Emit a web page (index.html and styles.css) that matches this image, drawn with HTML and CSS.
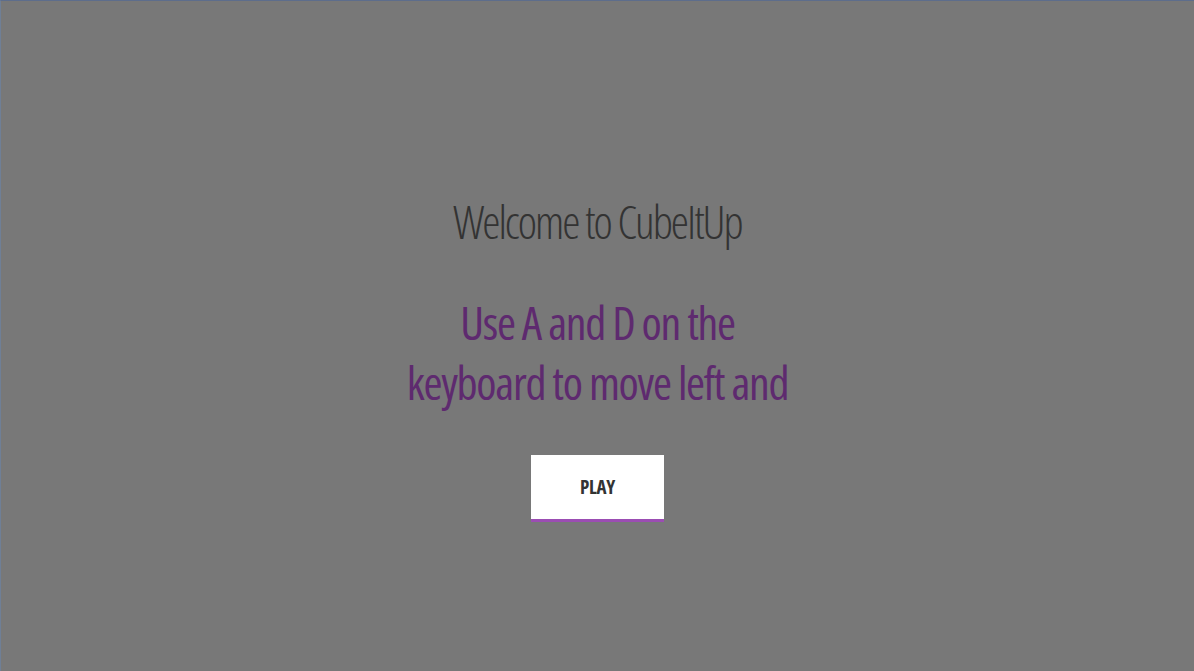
FILE: index.html
```html
<!DOCTYPE html>
<html>
<head>
<meta charset="utf-8">
<link rel="stylesheet" href="styles.css">
</head>
<body>
<div class="screen">
  <div class="menu">
    <h1 class="title">Welcome to CubeItUp</h1>
    <p class="instructions">Use A and D on the<br>keyboard to move left and</p>
    <button class="play">PLAY</button>
  </div>
</div>
</body>
</html>
```
FILE: styles.css
```css
html, body {
  margin: 0;
  padding: 0;
  width: 1194px;
  height: 671px;
  overflow: hidden;
  background: #787878;
}
.screen {
  box-sizing: border-box;
  width: 1194px;
  height: 671px;
  background: #787878;
  border-top: 1px solid #5d6d8c;
  border-left: 1px solid #6f7f96;
  display: flex;
  justify-content: center;
}
.menu {
  display: flex;
  flex-direction: column;
  align-items: center;
  padding-top: 191px;
  font-family: "Open Sans", sans-serif;
  font-stretch: 75%;
}
.title {
  margin: 0;
  font-size: 46px;
  font-weight: 300;
  line-height: 58px;
  letter-spacing: -2px;
  color: #333333;
}
.instructions {
  margin: 42px 0 0;
  font-size: 46px;
  line-height: 60px;
  letter-spacing: -1.3px;
  color: #5e2a6f;
  text-align: center;
}
.play {
  margin-top: 43px;
  width: 133px;
  height: 67px;
  box-sizing: border-box;
  background: #ffffff;
  border: none;
  border-bottom: 3px solid #9b4db3;
  font-family: "Open Sans", sans-serif;
  font-stretch: 75%;
  font-weight: 700;
  font-size: 19px;
  letter-spacing: -0.3px;
  color: #333333;
  padding: 0;
}
```
